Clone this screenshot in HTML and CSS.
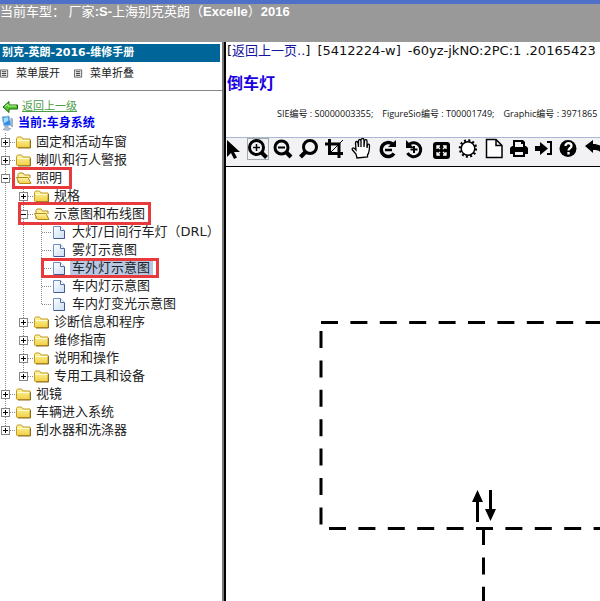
FILE: index.html
```html
<!DOCTYPE html>
<html lang="zh-CN">
<head>
<meta charset="utf-8">
<title>别克-英朗-2016-维修手册</title>
<link rel="stylesheet" href="styles.css">
</head>
<body>
<svg class="defs" aria-hidden="true">
  <defs>
    <linearGradient id="gold" x1="0" y1="0" x2="0" y2="1"><stop offset="0" stop-color="#fff6a8"/><stop offset="1" stop-color="#f2cf45"/></linearGradient>
    <linearGradient id="sheet" x1="0" y1="0" x2="1" y2="1"><stop offset="0" stop-color="#fff"/><stop offset="1" stop-color="#c9dcf5"/></linearGradient>
    <symbol id="plus" viewBox="0 0 16 18"><path d="M10 9.5h6" stroke="#888" stroke-dasharray="1 1"/><rect x="1.5" y="5.5" width="8" height="8" fill="#fff" stroke="#848484"/><path d="M3 9.5h5M5.5 7v5" stroke="#000"/></symbol>
    <symbol id="minus" viewBox="0 0 16 18"><path d="M10 9.5h6" stroke="#888" stroke-dasharray="1 1"/><rect x="1.5" y="5.5" width="8" height="8" fill="#fff" stroke="#848484"/><path d="M3 9.5h5" stroke="#000"/></symbol>
    <symbol id="branch" viewBox="0 0 16 18"><path d="M6 9.5h10" stroke="#888" stroke-dasharray="1 1"/></symbol>
    <symbol id="folder" viewBox="0 0 16 18"><path d="M.5 14V5.500l1-1.500h4l1.500 2h7v8.500H1.500z" fill="url(#gold)" stroke="#c49a22"/><path d="M1.500 7.500h12" stroke="#fffbd5"/><path d="M14.500 7v8H2" fill="none" stroke="#8d7020"/></symbol>
    <symbol id="open" viewBox="0 0 16 18"><path d="M2 14V5.500L3 4h4l1.500 2H14v3" fill="#fff3a0" stroke="#b58c1d"/><path d="M.5 8.500h11.500l3 6H3.500z" fill="url(#gold)" stroke="#b58c1d"/></symbol>
    <symbol id="doc" viewBox="0 0 16 18"><path d="M1.500 3.500h7l4 4v8h-11z" fill="url(#sheet)" stroke="#7090c4"/><path d="M8.500 3.500v4h4" fill="#fff" stroke="#506da4"/><path d="M2 15.500h10.500V8" fill="none" stroke="#405a8e"/></symbol>
    <symbol id="list" viewBox="0 0 10 10"><path d="M.5.5h8v8h-8z" fill="#fff" stroke="#555"/><path d="M2 2.500h5M2 4.500h5M2 6.500h5" stroke="#222"/></symbol>
  </defs>
</svg>
<header class="top">当前车型： 厂家<b>:S-</b>上海别克英朗（<b>Excelle</b>）<b>2016</b></header>
<main class="panes">
  <nav class="side">
    <h1 class="manual">别克-英朗-2016-维修手册</h1>
    <div class="actions">
      <button type="button"><svg class="list"><use href="#list"/></svg>菜单展开</button>
      <button type="button"><svg class="list"><use href="#list"/></svg>菜单折叠</button>
    </div>
    <div class="back"><svg viewBox="0 0 16 14"><path d="M1 7l6-5.500V5h8.500v4H7v3.500z" fill="#55c52c" stroke="#17690c"/><path d="M3 6.500L6 4v2h8" fill="none" stroke="#b5f58d"/></svg><a href="#">返回上一级</a></div>
    <div class="current"><svg viewBox="0 0 14 16"><path d="M2 2l7-1 2 9-7 1z" fill="#2b8ee8" stroke="#9bbbd8"/><path d="M3.500 3l4.500-.7.5 3-4 3z" fill="#a6dcff"/><path d="M11 3l1.500 1v8L11 11zM5 11.500l3-.5v2l3 .5-3 2-5-1 2-1z" fill="#b9c5d5" stroke="#7890b0" stroke-width=".6"/></svg>当前:车身系统</div>
    <ul class="tree">
      <li><svg class="i toggle"><use href="#plus"/></svg><svg class="i"><use href="#folder"/></svg><a href="#">固定和活动车窗</a></li>
      <li><svg class="i toggle"><use href="#plus"/></svg><svg class="i"><use href="#folder"/></svg><a href="#">喇叭和行人警报</a></li>
      <li><svg class="i toggle"><use href="#minus"/></svg><span class="mark mark-open"><svg class="i"><use href="#open"/></svg><a href="#">照明</a></span></li>
      <li><i></i><svg class="i toggle"><use href="#plus"/></svg><svg class="i"><use href="#folder"/></svg><a href="#">规格</a></li>
      <li><i></i><span class="mark mark-branch"><svg class="i toggle"><use href="#minus"/></svg><svg class="i"><use href="#open"/></svg><a href="#">示意图和布线图</a></span></li>
      <li><i></i><i></i><svg class="i leaf"><use href="#branch"/></svg><svg class="i"><use href="#doc"/></svg><a href="#">大灯/日间行车灯（DRL）</a></li>
      <li><i></i><i></i><svg class="i leaf"><use href="#branch"/></svg><svg class="i"><use href="#doc"/></svg><a href="#">雾灯示意图</a></li>
      <li><i></i><i></i><span class="mark mark-leaf"><svg class="i leaf"><use href="#branch"/></svg><svg class="i"><use href="#doc"/></svg><a class="selected" href="#">车外灯示意图</a></span></li>
      <li><i></i><i></i><svg class="i leaf"><use href="#branch"/></svg><svg class="i"><use href="#doc"/></svg><a href="#">车内灯示意图</a></li>
      <li><i></i><i></i><svg class="i leaf last"><use href="#branch"/></svg><svg class="i"><use href="#doc"/></svg><a href="#">车内灯变光示意图</a></li>
      <li><i></i><svg class="i toggle"><use href="#plus"/></svg><svg class="i"><use href="#folder"/></svg><a href="#">诊断信息和程序</a></li>
      <li><i></i><svg class="i toggle"><use href="#plus"/></svg><svg class="i"><use href="#folder"/></svg><a href="#">维修指南</a></li>
      <li><i></i><svg class="i toggle"><use href="#plus"/></svg><svg class="i"><use href="#folder"/></svg><a href="#">说明和操作</a></li>
      <li><i></i><svg class="i toggle last"><use href="#plus"/></svg><svg class="i"><use href="#folder"/></svg><a href="#">专用工具和设备</a></li>
      <li><svg class="i toggle"><use href="#plus"/></svg><svg class="i"><use href="#folder"/></svg><a href="#">视镜</a></li>
      <li><svg class="i toggle"><use href="#plus"/></svg><svg class="i"><use href="#folder"/></svg><a href="#">车辆进入系统</a></li>
      <li><svg class="i toggle last"><use href="#plus"/></svg><svg class="i"><use href="#folder"/></svg><a href="#">刮水器和洗涤器</a></li>
    </ul>
  </nav>
  <section class="content">
    <p class="crumb"><span>[<a href="#">返回上一页..</a>]</span><span>[5412224-w]</span><span>-60yz-jkNO:2PC:1 .20165423</span></p>
    <h2>倒车灯</h2>
    <p class="info"><span>SIE编号 : S0000003355;</span><span>FigureSio编号 : T00001749;</span><span>Graphic编号 : 3971865</span></p>
    <div class="tools">
      <button type="button" aria-label="选择"><svg viewBox="0 0 22 22"><path d="M6 2v17l4-4 3 6 3-1.500L13 14h6z"/></svg></button>
      <button type="button" class="on" aria-label="放大"><svg viewBox="0 0 22 22"><g class="ln"><circle cx="9.500" cy="9.500" r="7"/><path d="M14.500 14.500l5 5" stroke-width="4"/><path d="M9.500 6v7M6 9.500h7" stroke-width="1.500"/></g></svg></button>
      <button type="button" aria-label="缩小"><svg viewBox="0 0 22 22"><g class="ln"><circle cx="8.500" cy="9.500" r="6.500"/><path d="M13 14l5 5" stroke-width="4"/><path d="M5 9.500h7" stroke-width="2"/></g></svg></button>
      <button type="button" aria-label="查看"><svg viewBox="0 0 22 22"><g class="ln"><circle cx="11" cy="9" r="6.500"/><path d="M6.500 14l-5 5" stroke-width="4"/></g></svg></button>
      <button type="button" aria-label="裁剪"><svg viewBox="0 0 22 22"><g class="ln"><path d="M0 6h14v14M4.500 1v14.500H18" stroke-width="3"/><path d="M5 15L18 2" stroke-width="1"/></g></svg></button>
      <button type="button" aria-label="平移"><svg viewBox="0 0 22 22"><path d="M6 20l-1-4-3.500-4c-1-1.500.5-3 2-1.500L5 12 4.500 5c0-2 2-2 2.500 0l.5 4V3c0-2 2.500-2 2.500 0v6-7c0-2 3-2 3 0v7l.5-6c.2-2 2.500-1.500 2.500 0v7l.5-3c.5-1.500 2-1 2 .5 0 5-.5 7.500-2 9.500v2z" fill="#fff" stroke="#000" stroke-width="1.300"/></svg></button>
      <button type="button" aria-label="重做"><svg viewBox="0 0 22 22"><g class="ln"><path d="M17 15.500A7 7 0 1 1 15.500 6" stroke-width="3.500"/><path d="M8 12h7" stroke-width="2.500"/></g><path d="M11 9h8V2z"/></svg></button>
      <button type="button" aria-label="旋转"><svg viewBox="0 0 22 22"><g class="ln"><path d="M6 6.500A7 7 0 1 1 4.500 15" stroke-width="3"/><path d="M11 8v7M7.500 11.500h7" stroke-width="2"/></g><path d="M3 2v8h8z"/></svg></button>
      <button type="button" aria-label="适应窗口"><svg viewBox="0 0 22 22"><rect x="4" y="4" width="17" height="17" rx="3"/><g fill="none" stroke="#fff" stroke-width="1.300"><path d="M8 11V8h3M14 8h3v3M17 14v3h-3M11 17H8v-3M8 8l3 3M17 8l-3 3M17 17l-3-3M8 17l3-3"/></g></svg></button>
      <button type="button" aria-label="亮度"><svg viewBox="0 0 22 22"><circle cx="13" cy="10.500" r="8" fill="none" stroke="#000" stroke-width="2.500" stroke-dasharray="2 2.189"/><circle cx="13" cy="10.500" r="6.800" fill="#fff" stroke="#000" stroke-width="1.500"/></svg></button>
      <button type="button" aria-label="新页面"><svg viewBox="0 0 22 22"><path d="M5.500 1.500H15l6 6v12H5.500zM15 1.500v6h6" fill="#fff" stroke="#000" stroke-width="1.500"/></svg></button>
      <button type="button" aria-label="打印"><svg viewBox="0 0 22 22"><path d="M6 8V2h10l2 2v4h1l2 2v6h-3v3H6v-3H3v-6l2-2zM8 4v5h8V6h-2V4zM8 14v3h8v-3z" fill-rule="evenodd"/></svg></button>
      <button type="button" aria-label="进入"><svg viewBox="0 0 22 22"><path d="M2 8h5V4l8 6.500L7 17v-4H2z"/><path d="M14 4h4v12h-4" fill="none" stroke="#000" stroke-width="2"/></svg></button>
      <button type="button" aria-label="帮助"><svg viewBox="0 0 22 22"><circle cx="9" cy="10.500" r="8.500"/><path d="M6.500 8c0-4 6-3.500 6 0 0 2-3 2-3 4.500M9.500 14v2.500" fill="none" stroke="#fff" stroke-width="2.300"/></svg></button>
      <button type="button" aria-label="撤销"><svg viewBox="0 0 22 22"><path d="M0 8l8-6v4c8 0 12 4 10 12-2-5-5-6-10-6v3z"/></svg></button>
    </div>
    <div class="canvas">
      <svg role="img" aria-label="倒车灯示意图">
        <g class="dash">
          <path d="M95 155.500H2000" stroke-dasharray="17 12.400"/>
          <path d="M95 164V358" stroke-dasharray="17 12.400"/>
          <path d="M103 361.500H2000" stroke-dasharray="17 12.400"/>
          <path d="M257.500 361V2000" stroke-dasharray="17 12.400"/>
        </g>
        <path d="M251.500 323l5.500 12h-4v20h-3v-20h-4zM264.500 354l-5.500-12h4v-19h3v19h4z"/>
      </svg>
    </div>
  </section>
</main>
</body>
</html>
```
FILE: styles.css
```css
* { box-sizing: border-box; }
body {
  margin: 0;
  height: 100vh;
  display: flex;
  flex-direction: column;
  overflow: hidden;
  background: #fff;
  color: #222;
  font: 13px/18px "DejaVu Sans", "Noto Sans CJK SC", sans-serif;
  white-space: nowrap;
}
.defs { position: absolute; width: 0; height: 0; }
h1, h2, p, ul { margin: 0; padding: 0; }
a { color: inherit; text-decoration: none; }
button {
  border: 0;
  padding: 0;
  background: none;
  font: inherit;
  color: inherit;
}
.top {
  height: 42px;
  border-top: 4px solid #4f70c8;
  background: #999;
  color: #fff;
  font: 13px/16px "Liberation Sans", "Noto Sans CJK SC", sans-serif;
}
.panes { flex: 1; min-height: 0; display: flex; }
.side {
  flex: none;
  width: 226px;
  padding-top: 2px;
  border-right: 2px solid #000;
  box-shadow: inset -2px 0 #777;
}
.manual {
  margin-right: 4px;
  padding-left: 2px;
  background: #069;
  color: #fff;
  font-size: 11px;
  line-height: 18px;
}
.actions {
  display: flex;
  gap: 14px;
  height: 29px;
  margin-right: 2px;
  padding-bottom: 5px;
  border-bottom: 1px solid #888;
  font-size: 11px;
}
.actions button { display: flex; align-items: center; gap: 7px; }
.list { width: 9px; height: 10px; }
.back, .current { display: flex; align-items: center; height: 16px; }
.back { margin-top: 8px; gap: 4px; padding-left: 2px; font-size: 11px; }
.back svg { width: 16px; height: 14px; }
.back a { color: #4a9d46; text-decoration: underline; }
.current { gap: 4px; color: #00e; font-size: 12px; font-weight: bold; }
.current svg { width: 14px; height: 16px; }
.tree { list-style: none; margin-top: 2px; }
.tree li { display: flex; height: 18px; }
.tree a { margin-left: 4px; height: 18px; line-height: 18px; }
.i { flex: none; width: 16px; height: 18px; }
.tree i { flex: none; width: 18px; }
.tree i, .toggle, .leaf {
  background: repeating-linear-gradient(#888 0 1px, transparent 1px 2px) 5px 0 / 1px 18px no-repeat;
}
.tree .last { background-size: 1px 10px; }
.tree .selected { padding-right: 3px; margin-left: 2px; padding-left: 2px; background: #b8c8e4; }
.mark { display: flex; position: relative; }
.mark::after { content: ""; position: absolute; border: 3px solid #e83a3c; }
.mark-open::after { inset: -2px -10px -2px -4px; }
.mark-branch::after { inset: -3px -6px -2px 0; }
.mark-leaf::after { inset: -1px -6px -1px 5px; }
.content {
  flex: 1;
  min-width: 0;
  display: flex;
  flex-direction: column;
  overflow: hidden;
}
.crumb { display: flex; gap: 7px; padding-left: 1px; color: #111; }
.crumb a { color: #1414a0; }
h2 {
  margin-top: 12px;
  padding-left: 1px;
  color: #1a00e0;
  font-size: 16px;
  line-height: 24px;
}
.info {
  display: flex;
  gap: 9px;
  margin: 12px 0 17px 51px;
  color: #111;
  font: 9px/12px "Open Sans", "Noto Sans CJK SC", sans-serif;
}
.tools {
  display: flex;
  gap: 4px;
  height: 30px;
  border-top: 1px solid #a9b8d6;
  border-bottom: 1px solid #000;
  background: #f2f2f5;
}
.tools button { flex: none; width: 22px; height: 22px; }
.tools button:first-child { margin-left: -5px; }
.tools svg { display: block; width: 22px; height: 22px; }
.tools .on { outline: 1px solid #a0a8b0; outline-offset: -1px; }
.ln { fill: none; stroke: #000; stroke-width: 3; }
.canvas { flex: 1; min-height: 0; }
.canvas svg { display: block; width: 100%; height: 100%; }
.dash { fill: none; stroke: #000; stroke-width: 3; }
```
